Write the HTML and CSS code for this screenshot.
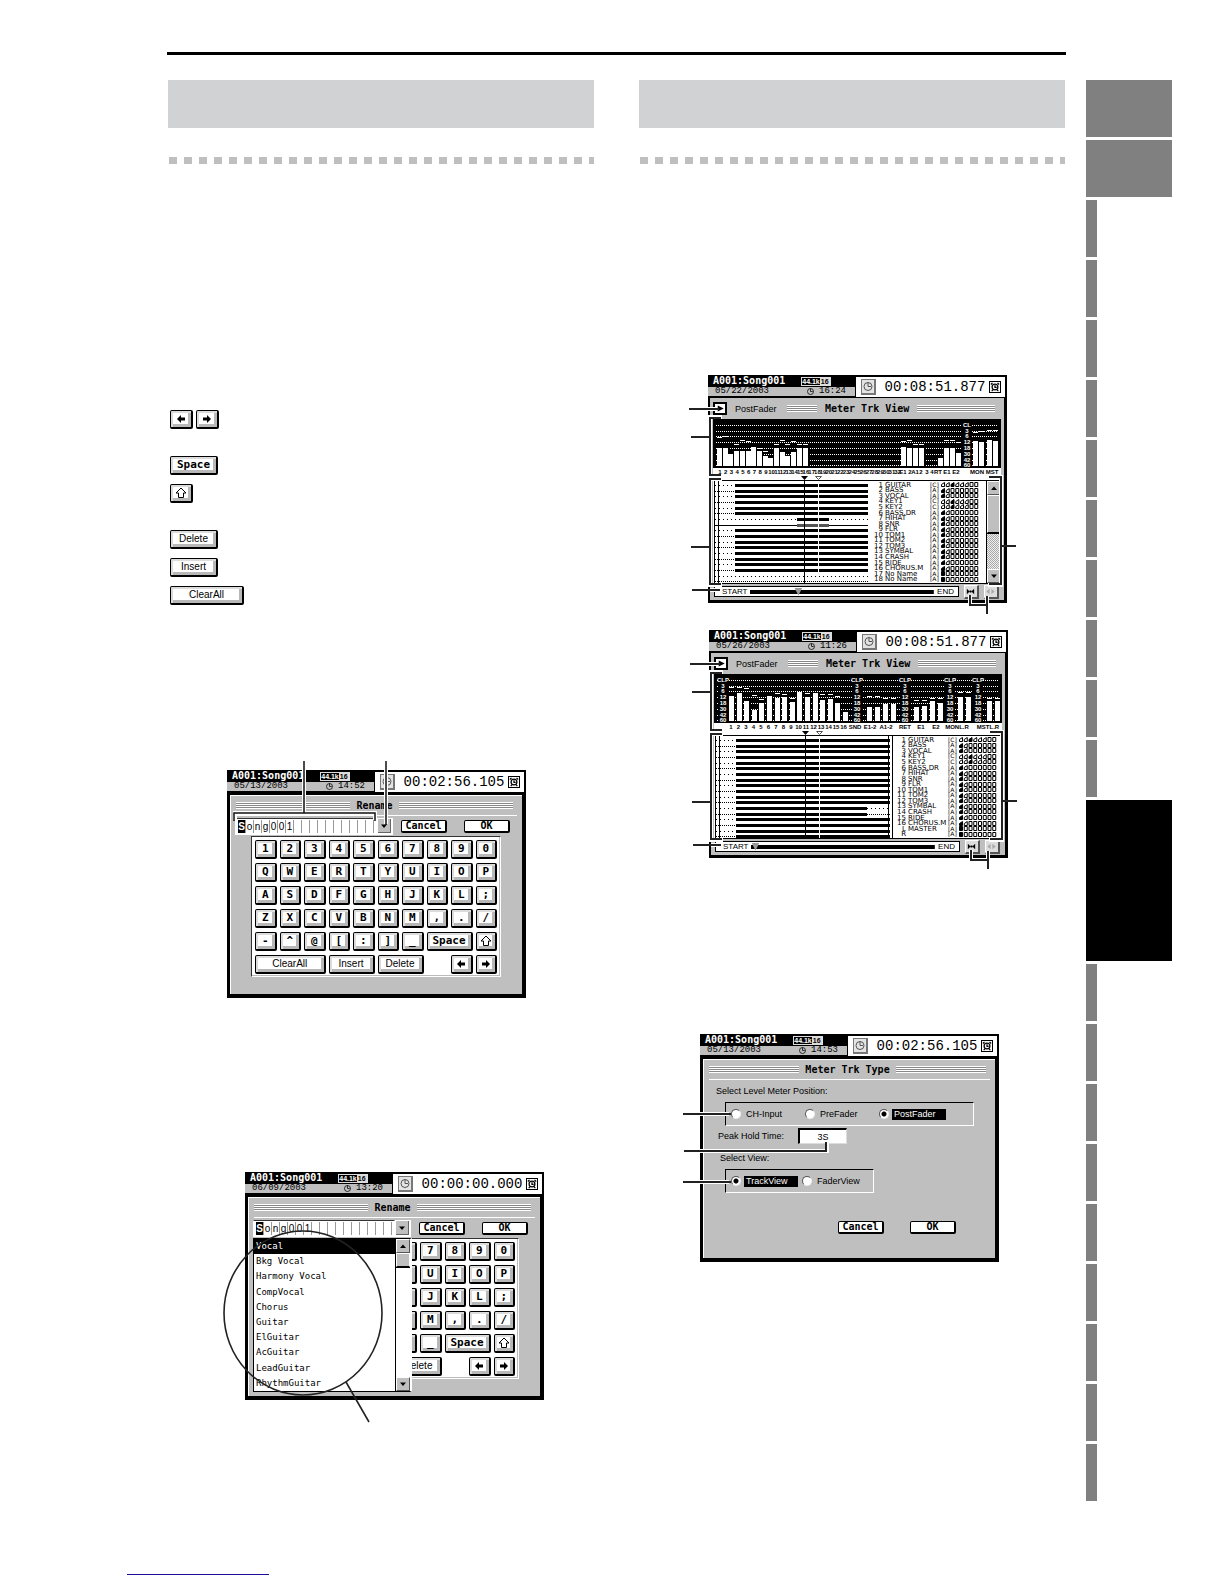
FILE: index.html
```html
<!DOCTYPE html>
<html lang="en">
<head>
<meta charset="utf-8">
<title>Rename and Meter Trk View</title>
<link rel="stylesheet" href="styles.css">
<script src="script.js" defer></script>
</head>
<body>
<svg class="defs" aria-hidden="true">
  <symbol id="clock" viewBox="0 0 12 12"><circle cx="6" cy="6" r="4" fill="none" stroke="currentColor"/><path d="M6 2v4h3" fill="none" stroke="currentColor"/></symbol>
  <symbol id="alarm" viewBox="0 0 12 12"><circle cx="6" cy="6" r="3.500" fill="none" stroke="currentColor" stroke-width="1.500"/><path d="M6 4v2.500h2M1 3l2-2M11 3L9 1M2 11l1.500-1.500M10 11L8.500 9.500" fill="none" stroke="currentColor" stroke-width="1.500"/></symbol>
  <symbol id="left" viewBox="0 0 12 12"><path d="M2 6l4-4v2.500h4v3H6V10z" fill="currentColor"/></symbol>
  <symbol id="right" viewBox="0 0 12 12"><path d="M10 6L6 2v2.500H2v3h4V10z" fill="currentColor"/></symbol>
  <symbol id="shift" viewBox="0 0 12 12"><path d="M6 1l5 5H8.500v4.500h-5V6H1z" fill="none" stroke="currentColor"/></symbol>
  <symbol id="down" viewBox="0 0 12 12"><path d="M3 4.500h6l-3 3.500z" fill="currentColor"/></symbol>
  <symbol id="up" viewBox="0 0 12 12"><path d="M3 8h6L6 4.500z" fill="currentColor"/></symbol>
  <symbol id="play" viewBox="0 0 12 12"><path d="M3 2l8 4-8 4z" fill="currentColor"/></symbol>
  <symbol id="zoomin" viewBox="0 0 12 12"><path d="M2 3l3 3-3 3zM10 3L7 6l3 3zM5 5h2v2H5z" fill="currentColor"/></symbol>
  <symbol id="zoomout" viewBox="0 0 12 12"><path d="M5 3L1.500 6 5 9zM7 3l3.500 3L7 9z" fill="currentColor"/></symbol>
  <symbol id="meter-lines" overflow="visible">
    <g fill="none" stroke="#fff" stroke-width="4">
      <path d="M0 34h8M14 42H2v59h12M14 104H2v106h12M2 215h9M280 102h13v108h-13M262 220v10h17v-9"/>
    </g>
    <g fill="none" stroke="#222" stroke-width="2">
      <path d="M-19 34h30M-17 62H2M13 43H2v57h11M13 104H2v105h11M-17 172H2M-16 215h28M281 102h12v107h-12M293 171h15M262 220v10h17M279 221v18"/>
    </g>
  </symbol>
</svg>

<div class="page">
  <main class="content">
    <section class="column">
      <div class="banner"></div>
      <div class="dots"></div>
      <ul class="legend">
        <li><button class="key" aria-label="Cursor left"><svg><use href="#left"/></svg></button><button class="key" aria-label="Cursor right"><svg><use href="#right"/></svg></button></li>
        <li class="apart"><button class="key wide strong">Space</button></li>
        <li><button class="key" aria-label="Shift"><svg><use href="#shift"/></svg></button></li>
        <li class="apart"><button class="key wide">Delete</button></li>
        <li><button class="key wide">Insert</button></li>
        <li><button class="key widest">ClearAll</button></li>
      </ul>

      <figure class="screen rename-a" data-date="05/13/2003" data-time="14:52" data-rate="44.1k" data-counter="00:02:56.105">
        <div class="dialog">
          <h2 class="title"><span>Rename</span></h2>
          <div class="namebar">
            <div class="name"></div>
            <button class="pick" aria-label="Choose a name"><svg><use href="#down"/></svg></button>
            <button class="action">Cancel</button>
            <button class="action">OK</button>
          </div>
          <div class="keyboard"></div>
        </div>
        <svg class="overlay" aria-hidden="true">
          <path d="M77-8v50M8 50V43h140v7M159-8v62" fill="none" stroke="#fff" stroke-width="4"/>
          <path d="M77-9v52M7 51V43h141v8M159-9v64" fill="none" stroke="#111" stroke-width="1.500"/>
        </svg>
      </figure>

      <figure class="screen rename-b" data-date="06/09/2003" data-time="13:20" data-rate="44.1k" data-counter="00:00:00.000">
        <div class="dialog">
          <h2 class="title"><span>Rename</span></h2>
          <div class="namebar">
            <div class="name"></div>
            <button class="pick" aria-label="Choose a name"><svg><use href="#down"/></svg></button>
            <button class="action">Cancel</button>
            <button class="action">OK</button>
          </div>
          <div class="keyboard behind"></div>
          <div class="menu">
            <ul role="listbox" aria-label="Names">
              <li role="option" aria-selected="true">Vocal</li>
              <li role="option">Bkg Vocal</li>
              <li role="option">Harmony Vocal</li>
              <li role="option">CompVocal</li>
              <li role="option">Chorus</li>
              <li role="option">Guitar</li>
              <li role="option">ElGuitar</li>
              <li role="option">AcGuitar</li>
              <li role="option">LeadGuitar</li>
              <li role="option">RhythmGuitar</li>
            </ul>
            <div class="scroll plain">
              <button aria-label="Scroll up"><svg><use href="#up"/></svg></button>
              <span class="thumb"></span>
              <span class="track"></span>
              <button aria-label="Scroll down"><svg><use href="#down"/></svg></button>
            </div>
          </div>
        </div>
        <svg class="overlay" aria-hidden="true">
          <g fill="none" stroke="#222" stroke-width="1.600"><ellipse cx="58" cy="141" rx="79" ry="82"/><path d="M101 210l23 40"/></g>
        </svg>
      </figure>
    </section>

    <section class="column">
      <div class="banner"></div>
      <div class="dots"></div>
      <figure class="screen meter-a" data-date="05/22/2003" data-time="16:24" data-rate="44.1k" data-counter="00:08:51.877">
        <div class="view" data-view="a"></div>
        <svg class="overlay" aria-hidden="true"><use href="#meter-lines"/></svg>
      </figure>
      <figure class="screen meter-b" data-date="05/26/2003" data-time="11:26" data-rate="44.1k" data-counter="00:08:51.877">
        <div class="view" data-view="b"></div>
        <svg class="overlay" aria-hidden="true"><use href="#meter-lines"/></svg>
      </figure>
      <figure class="screen meter-type" data-date="05/13/2003" data-time="14:53" data-rate="44.1k" data-counter="00:02:56.105">
        <form class="dialog">
          <h2 class="title"><span>Meter Trk Type</span></h2>
          <p class="caption" id="position">Select Level Meter Position:</p>
          <div class="group" role="radiogroup" aria-labelledby="position">
            <label><input type="radio" name="position"><span>CH-Input</span></label>
            <label><input type="radio" name="position"><span>PreFader</span></label>
            <label><input type="radio" name="position" checked><span>PostFader</span></label>
          </div>
          <div class="hold"><label for="hold">Peak Hold Time:</label><input id="hold" value="3S"></div>
          <p class="caption second" id="view">Select View:</p>
          <div class="group short" role="radiogroup" aria-labelledby="view">
            <label><input type="radio" name="view" checked><span>TrackView</span></label>
            <label><input type="radio" name="view"><span>FaderView</span></label>
          </div>
          <div class="buttons"><button type="button" class="action">Cancel</button><button type="button" class="action">OK</button></div>
        </form>
        <svg class="overlay" aria-hidden="true">
          <path d="M0 80h29M0 117h127v-8M0 148h29" fill="none" stroke="#fff" stroke-width="4"/>
          <path d="M-17 80h48M-16 117h142v-9M-17 148h48" fill="none" stroke="#222" stroke-width="2"/>
        </svg>
      </figure>
    </section>
  </main>
  <ul class="tabs">
    <li class="full"></li><li class="full"></li>
    <li></li><li></li><li></li><li></li><li></li><li></li><li></li><li></li><li></li><li></li>
    <li class="current"></li>
    <li></li><li></li><li></li><li></li><li></li><li></li><li></li><li></li><li></li>
  </ul>
</div>
<footer class="foot"></footer>
</body>
</html>
```
FILE: styles.css
```css
* { box-sizing: border-box; }
body { margin: 0; background: #fff; color: #000; font-family: "Liberation Sans", Arial, sans-serif; font-size: 10px; line-height: 12px; }
ul, figure, h2, p { margin: 0; padding: 0; list-style: none; }
button, input { font: inherit; color: inherit; margin: 0; padding: 0; }
.defs { display: none; }

.page { display: flex; align-items: flex-start; gap: 20px; padding: 52px 52px 0 167px; }
.content { flex: 1; display: grid; grid-template-columns: 1fr 1fr; column-gap: 43px; border-top: 3px solid #000; padding-top: 25px; }
.banner { height: 48px; margin: 0 1px; background: #d1d2d4; }
.dots { height: 7px; margin: 29px 1px 0 2px; background: repeating-linear-gradient(90deg, #bfbfbf 0 8px, #fff 8px 15px); }
.tabs { width: 86px; display: flex; flex-direction: column; gap: 3px; margin-top: 28px; }
.tabs li { width: 11px; height: 57px; background: #808080; }
.tabs .full { width: 86px; }
.tabs .current { width: 86px; height: 161px; background: #000; }
.foot { width: 142px; margin: 73px 0 8px 127px; border-top: 1px solid #1a0d9a; }

.legend { display: flex; flex-direction: column; gap: 9px; margin: 246px 0 0 3px; }
.legend li { display: flex; gap: 3px; height: 19px; }
.legend .apart { margin-top: 18px; }

.key { width: 23px; height: 19px; display: flex; align-items: center; justify-content: center; background: #fff; border: 1px solid #000; border-width: 1px 2px 2px 1px; border-radius: 2px; box-shadow: inset 2px 2px #dcdcdc, inset -3px -3px #b8b8b8; font-family: "Liberation Sans", Arial, sans-serif; font-size: 10px; line-height: 12px; }
.key svg { width: 12px; height: 12px; }
.key.wide { width: 48px; }
.key.widest { width: 74px; }
.key.strong { font: bold 11px/12px "DejaVu Sans Mono", monospace; }

.screen { position: relative; width: 299px; height: 228px; display: flex; flex-direction: column; background: #000; }
.rename-a { margin: 165px 0 0 60px; }
.rename-b { margin: 174px 0 0 78px; }
.meter-a { margin: 211px 0 0 70px; }
.meter-b { margin: 27px 0 0 71px; }
.meter-type { margin: 176px 0 0 62px; }
.overlay { position: absolute; inset: 0; width: 100%; height: 100%; overflow: visible; pointer-events: none; }

.status { display: flex; height: 23px; }
.song { width: 147px; display: flex; flex-direction: column; }
.song div { display: flex; align-items: center; }
.song .line1 { height: 12px; padding-left: 5px; gap: 16px; color: #fff; font: bold 10px/12px "DejaVu Sans Mono", monospace; }
.rate { display: flex; font: bold 7px/7px "Liberation Sans", Arial, sans-serif; border: 1px solid #ddd; }
.rate b { background: #ddd; color: #000; padding: 0 1px; }
.song .line2 { height: 9px; padding: 0 9px 0 7px; background: #bfbfbf; font: 9px/9px "Liberation Mono", monospace; }
.line2 svg { width: 9px; height: 9px; margin: 0 4px 0 auto; }
.counter { flex: 1; display: flex; align-items: center; margin: 2px 2px 1px 1px; padding: 0 4px 0 5px; background: #fff; font: 14px/18px "Liberation Mono", monospace; }
.counter svg { width: 12px; height: 12px; }
.counter span { margin: 0 auto; padding-left: 5px; }
.counter .box { width: 15px; height: 16px; border: 1px solid #777; border-width: 1px 2px 2px 1px; background: #e4e4e4; color: #555; }
.counter .alarm { border: 1px solid #000; }

.dialog, .view { position: relative; flex: 1; display: flex; flex-direction: column; background: #bfbfbf; }
.dialog { margin: 2px 4px 4px 3px; border: 1px solid #fff; border-width: 1px 0 0 1px; }
.view { margin: 0 3px 3px 2px; }
.title { display: flex; align-items: center; gap: 6px; height: 20px; margin: 0 5px; padding-right: 4px; font: bold 10px/12px "DejaVu Sans Mono", monospace; border-bottom: 1px solid #fff; }
.title::before, .title::after, .stripes { content: ""; flex: 1; height: 7px; background: repeating-linear-gradient(#fff 0 1px, #888 1px 2px); }

.namebar { display: flex; align-items: center; height: 20px; padding-left: 4px; }
.name { display: flex; height: 17px; width: 142px; padding: 1px 2px; border: 1px solid #fff; border-top-color: #333; background: #fff; }
.name input { width: 8px; min-width: 0; border: 0; border-right: 1px solid #999; text-align: center; font: 10px/13px "Liberation Sans", Arial, sans-serif; background: #fff; }
.name input:first-child { background: #000; color: #fff; font-weight: bold; }
.pick { width: 16px; height: 17px; display: flex; align-items: center; background: #bfbfbf; border: 1px solid #fff; border-width: 1px 2px 2px 1px; box-shadow: inset -1px -1px #666; }
.pick svg { width: 12px; height: 12px; }
.action { width: 46px; height: 13px; background: #fff; border: 1px solid #000; border-width: 1px 2px 2px 1px; border-radius: 2px; font: bold 10px/10px "DejaVu Sans Mono", monospace; }
.namebar .action { margin-left: 8px; }
.namebar .action + .action { margin-left: 17px; }
.keyboard { width: 250px; height: 141px; margin-left: 20px; padding: 3px; display: grid; grid-template-columns: repeat(10, 1fr); gap: 4px 3px; align-content: start; background: #fff; border: 1px solid #333; border-color: #333 #fff #fff #333; box-shadow: inset -1px -1px #bbb; }
.keyboard .key { width: auto; font: bold 11px/12px "DejaVu Sans Mono", monospace; }
.keyboard .s2 { grid-column: span 2; }
.keyboard .s3 { grid-column: span 3; }
.keyboard .light { font: 10px/12px "Liberation Sans", Arial, sans-serif; }
.keyboard .back { grid-column: 9; }

.menu { position: absolute; left: 4px; top: 40px; display: flex; width: 159px; height: 154px; background: #fff; border: 1px solid #000; border-right: 2px solid #fff; }
.menu ul { flex: 1; display: grid; grid-template-rows: repeat(10, 1fr); overflow: hidden; }
.menu li { padding-left: 2px; font: 9px/15px "DejaVu Sans Mono", monospace; }
.menu [aria-selected] { background: #000; color: #fff; }
.scroll { width: 15px; display: flex; flex-direction: column; border-left: 1px solid #000; background: #bfbfbf; }
.scroll button { width: 14px; height: 14px; border: 1px solid #fff; border-right-color: #555; border-bottom-color: #555; background: #bfbfbf; }
.scroll svg { display: block; width: 12px; height: 12px; }
.thumb { height: 14px; border: 1px solid #fff; border-bottom: 1px solid #000; background: #bfbfbf; }
.thumb.tall { height: 38px; }
.track { flex: 1; border-top: 1px solid #000; background: repeating-conic-gradient(#aaa 0 25%, #eee 0 50%) 0 0 / 2px 2px; }
.plain .track { background: #fff; }

.caption { margin: 5px 0 0 12px; font-size: 9px; }
.caption.second { margin: 8px 0 0 16px; }
.group { display: flex; align-items: center; width: 249px; height: 24px; margin: 5px 0 0 21px; padding-left: 5px; border: 1px solid #000; border-color: #000 #fff #fff #000; }
.group.short { width: 149px; margin-top: 5px; }
.group label { display: flex; align-items: center; gap: 3px; width: 74px; }
.group span { padding: 0 2px; line-height: 11px; font-size: 9px; }
.group input { flex: none; appearance: none; width: 10px; height: 10px; border-radius: 5px; background: #fff; border: 1px solid #777; border-color: #555 #eee #eee #555; }
.group input:checked { background: radial-gradient(#000 0 2px, #fff 3px); }
.group input:checked + span { background: #000; color: #fff; flex: none; width: 54px; }
.hold { display: flex; align-items: center; height: 16px; margin: 2px 0 0 14px; font-size: 9px; }
.hold label { width: 80px; }
.hold input { width: 49px; height: 16px; text-align: center; border: 1px solid #000; border-width: 2px 1px 1px 2px; border-color: #000 #ddd #ddd #000; background: #fff; }
.buttons { display: flex; gap: 26px; margin: 28px 0 0 134px; }

.viewbar { display: flex; align-items: center; height: 21px; padding: 0 9px 0 3px; }
.viewbar button { width: 14px; height: 13px; background: #fff; border: 2px solid #000; margin-right: 8px; }
.viewbar button svg { display: block; width: 10px; height: 9px; }
.viewbar .mode { width: 52px; font-size: 9px; }
.viewbar .stripes { flex: none; width: 30px; }
.viewbar .stripes:last-child { flex: 1; }
.viewbar h2 { margin: 0 8px; font: bold 10px/12px "DejaVu Sans Mono", monospace; white-space: nowrap; }
.meter { display: block; width: 288px; height: 57px; margin-left: 3px; font: bold 6px "Liberation Sans", Arial, sans-serif; }
.gap { height: 4px; margin-left: 3px; width: 288px; background: #fff; }
.tracks { position: relative; display: flex; height: 104px; width: 288px; margin-left: 3px; background: #fff; border-top: 1px solid #000; border-bottom: 1px solid #000; }
.lanes { width: 157px; height: 102px; }
.wide-lanes .lanes { width: 179px; }
.names { flex: 1; display: grid; grid-template-rows: repeat(18, 1fr); font: 7px/6px "DejaVu Sans", sans-serif; padding: 1px 0; }
.names div { display: flex; align-items: center; min-height: 0; white-space: nowrap; }
.num { width: 13px; text-align: right; margin-right: 2px; }
.label { flex: 1; }
.send { width: 11px; font-size: 6px; }
.cells { width: 38px; height: 5px; margin-right: 7px; }
.wide-lanes .cells { margin-right: 5px; }
.seek { display: flex; align-items: center; gap: 5px; height: 15px; padding: 0 4px; }
.seek label { display: flex; align-items: center; width: 245px; height: 11px; gap: 3px; padding: 0 4px 0 7px; border: 1px solid #000; background: #fff; font-size: 8px; line-height: 9px; }
.seek input { flex: 1; min-width: 0; height: 9px; appearance: none; background: linear-gradient(#000 0 0) center / 100% 4px no-repeat; }
.seek input::-webkit-slider-thumb { appearance: none; width: 8px; height: 8px; background: #999; clip-path: polygon(0 0, 100% 0, 50% 100%); }
.seek button { width: 15px; height: 14px; background: #ddd; border: 1px solid #fff; border-width: 1px 2px 2px 1px; border-color: #fff #555 #555 #fff; }
.seek button svg { display: block; width: 11px; height: 11px; }
.seek button:disabled { color: #aaa; }
```
FILE: script.js
```js
const icon = (id) => `<svg aria-hidden="true"><use href="#${id}"/></svg>`;

/* Status bar shared by every screen */
for (const screen of document.querySelectorAll('.screen')) {
  const { date, time, rate, counter } = screen.dataset;
  screen.insertAdjacentHTML('afterbegin', `<div class="status">
    <div class="song">
      <div class="line1"><span>A001:Song001</span><span class="rate"><span>${rate}</span><b>16</b></span></div>
      <div class="line2"><span>${date}</span>${icon('clock')}<span>${time}</span></div>
    </div>
    <div class="counter"><svg class="box"><use href="#clock"/></svg><span>${counter}</span><svg class="alarm"><use href="#alarm"/></svg></div>
  </div>`);
}

/* Name fields: one box for each character */
for (const field of document.querySelectorAll('.name')) {
  field.innerHTML = 'Song001'.padEnd(17).split('')
    .map((c, i) => `<input maxlength="1" aria-label="Character ${i + 1}" value="${c.trim()}">`).join('');
}

/* On-screen keyboards; keys behind an open menu carry no caption */
for (const board of document.querySelectorAll('.keyboard')) {
  const behind = board.classList.contains('behind');
  const keys = [...'1234567890QWERTYUIOPASDFGHJKL;ZXCVBNM,./-^@[:]_'];
  board.innerHTML = keys.map((k, i) => `<button type="button" class="key" aria-label="${k}">${behind && i % 10 < 6 ? '' : k}</button>`).join('') +
    `<button type="button" class="key s2">Space</button>
     <button type="button" class="key" aria-label="Shift">${icon('shift')}</button>
     <button type="button" class="key s3 light" aria-label="ClearAll">${behind ? '' : 'ClearAll'}</button>
     <button type="button" class="key s2 light" aria-label="Insert">${behind ? '' : 'Insert'}</button>
     <button type="button" class="key s2 light">Delete</button>
     <button type="button" class="key back" aria-label="Cursor left">${icon('left')}</button>
     <button type="button" class="key" aria-label="Cursor right">${icon('right')}</button>`;
}

/* Level meters: bars are [x, height, peak y] */
const spread = (start, pitch, heights, peaks) => heights.map((h, i) => [Math.round(start + pitch * i), h, peaks[i]]);
const names = ['GUITAR', 'BASS', 'VOCAL', 'KEY1', 'KEY2', 'BASS.DR', 'HIHAT', 'SNR', 'FLR', 'TOM1', 'TOM2', 'TOM3', 'SYMBAL', 'CRASH', 'RIDE', 'CHORUS.M'];
const views = {
  a: {
    barWidth: 5,
    bars: [
      ...spread(4, 5.7, [18, 18, 12, 15, 15, 15, 18, 15, 10, 8, 18, 14, 10, 14, 18, 18], [18, 17, 0, 25, 21, 22, 28, 29, 32, 0, 25, 21, 25, 22, 25, 25]),
      ...spread(188, 5.9, [19, 18, 18, 18], [22, 21, 25, 25]),
      ...spread(225, 6, [8, 18, 18, 13], [0, 21, 21, 23]),
      ...spread(260, 6, [25, 24], [13, 12]), ...spread(274, 6, [26, 25], [11, 11]),
    ],
    scales: [[254, 'CL']],
    labels: [...Array.from({ length: 32 }, (_, i) => [7 + i * 5.73, i + 1]),
      [190, 'E1'], [197, '2'], [202, 'A1'], [208, '2'], [214, '3'], [219, '4'], [225, 'RT'], [234, 'E1'], [243, 'E2'], [264, 'MON'], [279, 'MST']],
    tracks: [...names.map((n, i) => [i + 1, n]), [17, 'No Name'], [18, 'No Name']],
    end: 155, wide: false,
  },
  b: {
    barWidth: 5,
    bars: [
      ...spread(15, 7.6, [25, 28, 20, 11, 18, 24, 23, 24, 19, 29, 24, 28, 21, 22, 18, 9], [13, 13, 14, 21, 25, 22, 19, 20, 24, 0, 19, 0, 20, 20, 22, 0]),
      ...spread(153, 8, [14, 14, 17, 17], [22, 22, 24, 24]),
      ...spread(200, 8, [14, 15, 20, 18], [26, 26, 24, 24]),
      ...spread(244, 8, [24, 24], [18, 18]), ...spread(273, 8, [20, 20], [24, 24]),
    ],
    scales: [[9, 'CLP'], [143, 'CLP'], [191, 'CLP'], [236, 'CLP'], [264, 'CLP']],
    labels: [...Array.from({ length: 16 }, (_, i) => [17 + i * 7.5, i + 1]),
      [141, 'SND'], [156, 'E1-2'], [172, 'A1-2'], [191, 'RET'], [207, 'E1'], [222, 'E2'], [243, 'MONL.R'], [274, 'MSTL.R']],
    tracks: [...names.map((n, i) => [i + 1, n]), ['L', 'MASTER'], ['R', '']],
    end: 176, wide: true,
  },
};

function meter(v) {
  const rows = [6, 12, 17, 23, 29, 35, 41, 46];
  const marks = ['3', '6', '12', '18', '30', '42', '60'];
  return `<svg class="meter" viewBox="0 0 288 57">
    <rect width="288" height="49" fill="#000"/><rect y="49" width="288" height="8" fill="#fff"/>
    ${rows.map((y) => `<path d="M3 ${y}.500h281" stroke="#fff" stroke-dasharray="1 1"/>`).join('')}
    ${v.bars.map(([x, h]) => `<rect x="${x}" y="${47 - h}" width="${v.barWidth}" height="${h}" fill="#fff"/><rect x="${x + v.barWidth}" y="${47 - h}" width="1" height="${h}"/>`).join('')}
    ${v.bars.filter((b) => b[2]).map(([x, , p]) => `<path d="M${x} ${p}.500h${v.barWidth}" stroke="#fff"/>`).join('')}
    ${v.scales.map(([x, top]) => `<rect x="${x - 5}" y="3" width="10" height="44" fill="#000"/>
      <g fill="#fff" text-anchor="middle">${[top, ...marks].map((t, i) => `<text x="${x}" y="${rows[i] + 2}">${t}</text>`).join('')}</g>`).join('')}
    <g text-anchor="middle">${v.labels.map(([x, t]) => `<text x="${x}" y="55">${t}</text>`).join('')}</g>
  </svg>`;
}

function lanes(v) {
  const pitch = 102 / 18;
  const width = v.wide ? 179 : 157;
  const lane = (_, i) => {
    const y = Math.round(4 + i * pitch);
    const dots = (a, b) => `<path d="M${a} ${y}.500H${b}" stroke="#000" stroke-dasharray="${i % 2 ? '1 1' : '1 3'}"/>`;
    const bar = (a, b, c = '#000') => `<rect x="${a}" y="${y - 1}" width="${b - a}" height="3" fill="${c}"/>`;
    if (!v.wide && i > 15) return dots(2, v.end);
    if (!v.wide && i === 6) return dots(2, v.end) + bar(84, 116);
    if (!v.wide && i === 7) return `<path d="M2 ${y}.500H${v.end}" stroke="#000"/>` + bar(84, 116, '#555');
    const stop = v.wide && (i === 12 || i === 13) ? 153 : v.end;
    return dots(2, 21) + bar(22, stop) + (stop < v.end ? dots(stop, v.end) : '');
  };
  return `<svg class="lanes" viewBox="0 0 ${width} 102">
    ${Array.from({ length: 18 }, lane).join('')}
    <path d="M1.500 0v102M5.500 0v102M91.500 0v102${v.wide ? 'M174.500 0v102M178.500 0v102' : ''}" stroke="#000"/>
    <path d="M105.500 0v102" stroke="#fff"/>
  </svg>`;
}

function cells(i) {
  const centre = [0, 3, 4].includes(i);
  return `<svg class="cells" viewBox="0 0 38 5">${Array.from({ length: 8 }, (_, c) => {
    const x = c * 4.75 + 0.5;
    const on = c === (centre ? 2 : 0);
    const shape = i < 16 && c < (centre ? 6 : 2) ? `M${x} 4.500v-2l3-2v4z` : `M${x} .500h3v4h-3z`;
    return `<path d="${shape}" fill="${on ? '#000' : 'none'}" stroke="#000"/>`;
  }).join('')}</svg>`;
}

for (const el of document.querySelectorAll('.view')) {
  const v = views[el.dataset.view];
  el.innerHTML = `
    <div class="viewbar"><button aria-label="Menu">${icon('play')}</button><span class="mode">PostFader</span>
      <span class="stripes"></span><h2>Meter Trk View</h2><span class="stripes"></span></div>
    ${meter(v)}
    <svg class="gap" viewBox="0 0 288 4"><path d="M88 0h7l-3.500 4z"/><path d="M102.500.5h6l-3 3z" fill="#fff" stroke="#555"/></svg>
    <div class="tracks ${v.wide ? 'wide-lanes' : ''}">
      ${lanes(v)}
      <div class="names">${v.tracks.map(([n, t], i) => `<div><span class="num">${n}</span><span class="label">${t}</span><span class="send">[${[0, 3, 4].includes(i) ? 'C' : 'A'}]</span>${cells(i)}</div>`).join('')}</div>
      ${v.wide ? '' : `<div class="scroll"><button aria-label="Scroll up">${icon('up')}</button><span class="thumb tall"></span><span class="track"></span><button aria-label="Scroll down">${icon('down')}</button></div>`}
    </div>
    <div class="seek"><label>START<input type="range" value="${v.wide ? 0 : 25}" aria-label="Position">END</label>
      <button aria-label="Zoom in">${icon('zoomin')}</button><button aria-label="Zoom out" disabled>${icon('zoomout')}</button></div>`;
}
```
